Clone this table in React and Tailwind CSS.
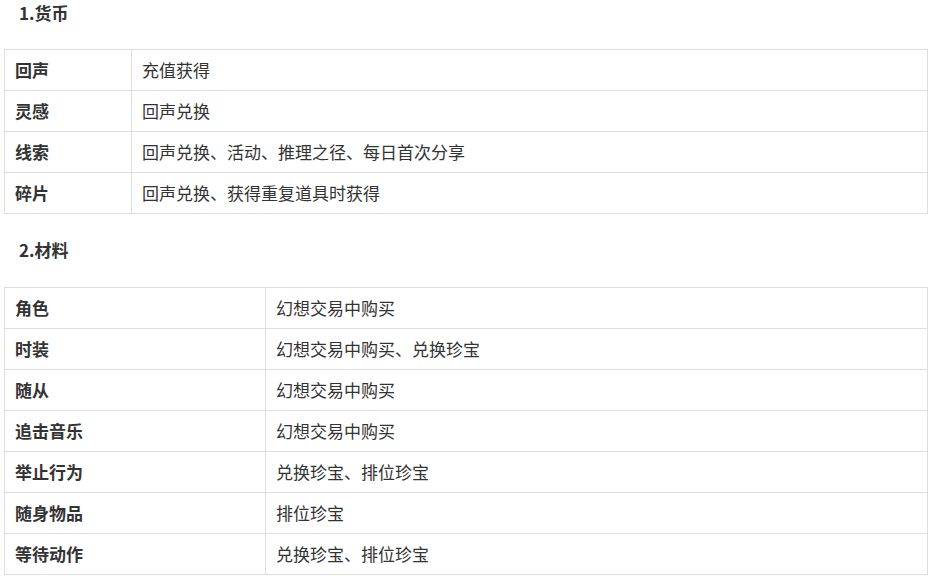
import React from "react";

const font = { fontFamily: '"Microsoft YaHei", "Noto Sans CJK SC", "Noto Sans", sans-serif' };

const currency = [
  ["回声", "充值获得"],
  ["灵感", "回声兑换"],
  ["线索", "回声兑换、活动、推理之径、每日首次分享"],
  ["碎片", "回声兑换、获得重复道具时获得"],
];

const materials = [
  ["角色", "幻想交易中购买"],
  ["时装", "幻想交易中购买、兑换珍宝"],
  ["随从", "幻想交易中购买"],
  ["追击音乐", "幻想交易中购买"],
  ["举止行为", "兑换珍宝、排位珍宝"],
  ["随身物品", "排位珍宝"],
  ["等待动作", "兑换珍宝、排位珍宝"],
];

function Table({ rows, cols }) {
  return (
    <div className={`ml-[4px] w-[924px] border-l border-t border-[#dddddd] grid ${cols}`}>
      {rows.map(([k, v]) => (
        <React.Fragment key={k}>
          <div className="h-[41px] border-r border-b border-[#dddddd] pl-[10px] flex items-center text-[17px] font-bold text-[#333333]">
            {k}
          </div>
          <div className="h-[41px] border-r border-b border-[#dddddd] pl-[10px] flex items-center text-[17px] text-[#333333]">
            {v}
          </div>
        </React.Fragment>
      ))}
    </div>
  );
}

export default function App() {
  return (
    <div className="w-[933px] h-[579px] bg-white overflow-hidden" style={font}>
      <div className="h-[28px] leading-[26px] pl-[19px] text-[17px] font-bold text-[#333333]">1.货币</div>
      <div className="mt-[21px]">
        <Table rows={currency} cols="grid-cols-[127px_1fr]" />
      </div>
      <div className="mt-[23px] h-[28px] leading-[26px] pl-[19px] text-[17px] font-bold text-[#333333]">2.材料</div>
      <div className="mt-[22px]">
        <Table rows={materials} cols="grid-cols-[261px_1fr]" />
      </div>
    </div>
  );
}
